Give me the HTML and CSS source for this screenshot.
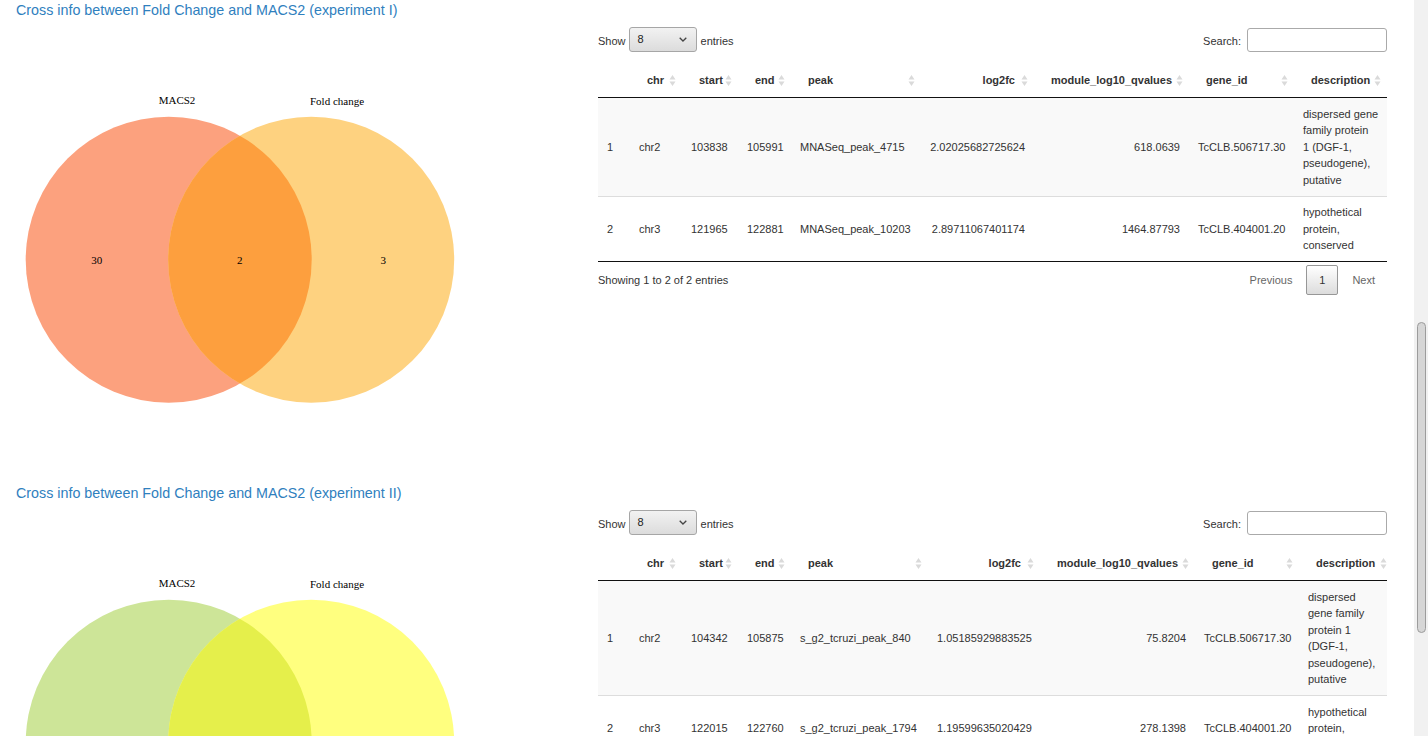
FILE: index.html
```html
<!DOCTYPE html>
<html lang="en">
<head>
<meta charset="utf-8">
<title>Cross info</title>
<link rel="stylesheet" href="styles.css">
</head>
<body>
<div class="page">

  <section class="panel">
    <h4 class="panel-title">Cross info between Fold Change and MACS2 (experiment I)</h4>
    <div class="panel-row">
      <div class="plot">
        <svg class="venn" width="582" height="463" viewBox="0 0 582 463">
          <defs><clipPath id="clip1"><circle cx="152.7" cy="239.7" r="143"/></clipPath></defs>
          <circle cx="152.7" cy="239.7" r="143" class="v1-a"/>
          <circle cx="295.2" cy="239.7" r="143" class="v1-b"/>
          <circle cx="295.2" cy="239.7" r="143" class="v1-ab" clip-path="url(#clip1)"/>
          <text class="venn-text" x="161" y="84">MACS2</text>
          <text class="venn-text" x="321" y="85">Fold change</text>
          <text class="venn-text" x="80.7" y="244">30</text>
          <text class="venn-text" x="223.7" y="244">2</text>
          <text class="venn-text" x="367.3" y="244">3</text>
        </svg>
      </div>
      <div class="table-col">
        <div class="dt-top">
          <div class="dt-length"><span class="lbl">Show</span><div class="select"><span>8</span><svg class="chev" width="8" height="5" viewBox="0 0 8 5"><path d="M0.7 0.7 4 4 7.3 0.7"/></svg></div><span class="lbl">entries</span></div>
          <div class="dt-filter"><span class="lbl">Search:</span><span class="search-input"></span></div>
        </div>
        <table class="dt dt-exp1">
          <colgroup><col class="c-rn"><col class="c-chr"><col class="c-start"><col class="c-end"><col class="c-peak"><col class="c-fc"><col class="c-q"><col class="c-gene"><col class="c-desc"></colgroup>
          <thead>
            <tr>
              <th class="rn"></th>
              <th><div class="th-in"><span>chr</span><svg class="sort" viewBox="0 0 19 17"><path d="M9.5 3 12.5 7.5H6.5z M9.5 14 12.5 9.5H6.5z"/></svg></div></th>
              <th><div class="th-in"><span>start</span><svg class="sort" viewBox="0 0 19 17"><path d="M9.5 3 12.5 7.5H6.5z M9.5 14 12.5 9.5H6.5z"/></svg></div></th>
              <th><div class="th-in"><span>end</span><svg class="sort" viewBox="0 0 19 17"><path d="M9.5 3 12.5 7.5H6.5z M9.5 14 12.5 9.5H6.5z"/></svg></div></th>
              <th><div class="th-in"><span>peak</span><svg class="sort" viewBox="0 0 19 17"><path d="M9.5 3 12.5 7.5H6.5z M9.5 14 12.5 9.5H6.5z"/></svg></div></th>
              <th class="num"><div class="th-in"><span>log2fc</span><svg class="sort" viewBox="0 0 19 17"><path d="M9.5 3 12.5 7.5H6.5z M9.5 14 12.5 9.5H6.5z"/></svg></div></th>
              <th class="num"><div class="th-in"><span>module_log10_qvalues</span><svg class="sort" viewBox="0 0 19 17"><path d="M9.5 3 12.5 7.5H6.5z M9.5 14 12.5 9.5H6.5z"/></svg></div></th>
              <th><div class="th-in"><span>gene_id</span><svg class="sort" viewBox="0 0 19 17"><path d="M9.5 3 12.5 7.5H6.5z M9.5 14 12.5 9.5H6.5z"/></svg></div></th>
              <th class="last"><div class="th-in"><span>description</span><svg class="sort" viewBox="0 0 19 17"><path d="M9.5 3 12.5 7.5H6.5z M9.5 14 12.5 9.5H6.5z"/></svg></div></th>
            </tr>
          </thead>
          <tbody>
            <tr class="odd">
              <td>1</td><td>chr2</td><td>103838</td><td>105991</td><td>MNASeq_peak_4715</td>
              <td class="num">2.02025682725624</td><td class="num">618.0639</td><td>TcCLB.506717.30</td>
              <td class="desc">dispersed gene<br>family protein<br>1 (DGF-1, pseudogene), putative</td>
            </tr>
            <tr>
              <td>2</td><td>chr3</td><td>121965</td><td>122881</td><td>MNASeq_peak_10203</td>
              <td class="num">2.89711067401174</td><td class="num">1464.87793</td><td>TcCLB.404001.20</td>
              <td class="desc">hypothetical protein, conserved</td>
            </tr>
          </tbody>
        </table>
        <div class="dt-bottom">
          <div class="dt-info">Showing 1 to 2 of 2 entries</div>
          <div class="dt-paginate">
            <span class="pg-btn">Previous</span><span class="pg-btn current">1</span><span class="pg-btn">Next</span>
          </div>
        </div>
      </div>
    </div>
  </section>

  <section class="panel">
    <h4 class="panel-title">Cross info between Fold Change and MACS2 (experiment II)</h4>
    <div class="panel-row">
      <div class="plot">
        <svg class="venn" width="582" height="463" viewBox="0 0 582 463">
          <defs><clipPath id="clip2"><circle cx="152.7" cy="239.7" r="143"/></clipPath></defs>
          <circle cx="152.7" cy="239.7" r="143" class="v2-a"/>
          <circle cx="295.2" cy="239.7" r="143" class="v2-b"/>
          <circle cx="295.2" cy="239.7" r="143" class="v2-ab" clip-path="url(#clip2)"/>
          <text class="venn-text" x="161" y="84">MACS2</text>
          <text class="venn-text" x="321" y="85">Fold change</text>
        </svg>
      </div>
      <div class="table-col">
        <div class="dt-top">
          <div class="dt-length"><span class="lbl">Show</span><div class="select"><span>8</span><svg class="chev" width="8" height="5" viewBox="0 0 8 5"><path d="M0.7 0.7 4 4 7.3 0.7"/></svg></div><span class="lbl">entries</span></div>
          <div class="dt-filter"><span class="lbl">Search:</span><span class="search-input"></span></div>
        </div>
        <table class="dt dt-exp2">
          <colgroup><col class="c-rn"><col class="c-chr"><col class="c-start"><col class="c-end"><col class="c-peak"><col class="c-fc"><col class="c-q"><col class="c-gene"><col class="c-desc"></colgroup>
          <thead>
            <tr>
              <th class="rn"></th>
              <th><div class="th-in"><span>chr</span><svg class="sort" viewBox="0 0 19 17"><path d="M9.5 3 12.5 7.5H6.5z M9.5 14 12.5 9.5H6.5z"/></svg></div></th>
              <th><div class="th-in"><span>start</span><svg class="sort" viewBox="0 0 19 17"><path d="M9.5 3 12.5 7.5H6.5z M9.5 14 12.5 9.5H6.5z"/></svg></div></th>
              <th><div class="th-in"><span>end</span><svg class="sort" viewBox="0 0 19 17"><path d="M9.5 3 12.5 7.5H6.5z M9.5 14 12.5 9.5H6.5z"/></svg></div></th>
              <th><div class="th-in"><span>peak</span><svg class="sort" viewBox="0 0 19 17"><path d="M9.5 3 12.5 7.5H6.5z M9.5 14 12.5 9.5H6.5z"/></svg></div></th>
              <th class="num"><div class="th-in"><span>log2fc</span><svg class="sort" viewBox="0 0 19 17"><path d="M9.5 3 12.5 7.5H6.5z M9.5 14 12.5 9.5H6.5z"/></svg></div></th>
              <th class="num"><div class="th-in"><span>module_log10_qvalues</span><svg class="sort" viewBox="0 0 19 17"><path d="M9.5 3 12.5 7.5H6.5z M9.5 14 12.5 9.5H6.5z"/></svg></div></th>
              <th><div class="th-in"><span>gene_id</span><svg class="sort" viewBox="0 0 19 17"><path d="M9.5 3 12.5 7.5H6.5z M9.5 14 12.5 9.5H6.5z"/></svg></div></th>
              <th class="last"><div class="th-in"><span>description</span><svg class="sort" viewBox="0 0 19 17"><path d="M9.5 3 12.5 7.5H6.5z M9.5 14 12.5 9.5H6.5z"/></svg></div></th>
            </tr>
          </thead>
          <tbody>
            <tr class="odd">
              <td>1</td><td>chr2</td><td>104342</td><td>105875</td><td>s_g2_tcruzi_peak_840</td>
              <td class="num">1.05185929883525</td><td class="num">75.8204</td><td>TcCLB.506717.30</td>
              <td class="desc">dispersed gene family protein 1 (DGF-1, pseudogene), putative</td>
            </tr>
            <tr>
              <td>2</td><td>chr3</td><td>122015</td><td>122760</td><td>s_g2_tcruzi_peak_1794</td>
              <td class="num">1.19599635020429</td><td class="num">278.1398</td><td>TcCLB.404001.20</td>
              <td class="desc">hypothetical protein, conserved</td>
            </tr>
          </tbody>
        </table>
      </div>
    </div>
  </section>

</div>
<div class="scrollbar"><div class="thumb"></div></div>
</body>
</html>
```

FILE: styles.css
```css
html, body {
  margin: 0;
  height: 736px;
  overflow: hidden;
  background: #fff;
}
body {
  display: flex;
  font-family: "Liberation Sans", Arial, Helvetica, sans-serif;
  font-size: 11px;
  color: #333;
}
.page {
  flex: 1;
  min-width: 0;
}
.panel {
  padding: 0 16px;
}
.panel-title {
  margin: 0;
  font-size: 14.3px;
  line-height: 20px;
  font-weight: normal;
  color: #2f80be;
}
.panel-row {
  display: flex;
}
.plot {
  width: 582px;
  flex: none;
}
.venn {
  display: block;
}
.venn-text {
  font-family: "Liberation Serif", "Times New Roman", serif;
  font-size: 11px;
  fill: #000;
  text-anchor: middle;
}
.v1-a { fill: #fca17e; }
.v1-b { fill: #fed280; }
.v1-ab { fill: #fd9f3e; }
.v2-a { fill: #cde598; }
.v2-b { fill: #ffff7f; }
.v2-ab { fill: #e5ef4b; }

.table-col {
  width: 789px;
  flex: none;
  padding-top: 7px;
}
.dt-top {
  display: flex;
  justify-content: space-between;
  align-items: center;
  height: 25px;
}
.dt-length, .dt-filter {
  display: flex;
  align-items: center;
  line-height: 16.5px;
}
.lbl {
  padding-top: 3px;
}
.select {
  display: flex;
  align-items: center;
  box-sizing: border-box;
  width: 68px;
  height: 25px;
  margin: 0 4px 0 3px;
  padding: 0 9px 0 8px;
  border: 1px solid #a6a6a6;
  border-radius: 3px;
  background: linear-gradient(#f2f2f2, #dcdcdc);
  color: #222;
}
.chev {
  margin-left: auto;
  fill: none;
  stroke: #444;
  stroke-width: 1.3;
}
.search-input {
  display: block;
  box-sizing: border-box;
  width: 140px;
  height: 24px;
  margin-left: 6px;
  border: 1px solid #aaa;
  border-radius: 3px;
  background: #fff;
}

.dt {
  width: 789px;
  margin-top: 12px;
  table-layout: fixed;
  border-collapse: separate;
  border-spacing: 0;
  border-bottom: 1px solid #111;
  line-height: 16.5px;
}
.c-rn { width: 32px; }
.c-chr { width: 52px; }
.c-start { width: 56px; }
.c-end { width: 53px; }
.dt-exp1 .c-peak { width: 130px; }
.dt-exp1 .c-fc { width: 113px; }
.dt-exp1 .c-q { width: 155px; }
.dt-exp1 .c-gene { width: 105px; }
.dt-exp1 .c-desc { width: 93px; }
.dt-exp2 .c-peak { width: 137px; }
.dt-exp2 .c-fc { width: 112px; }
.dt-exp2 .c-q { width: 155px; }
.dt-exp2 .c-gene { width: 104px; }
.dt-exp2 .c-desc { width: 88px; }

.dt th {
  padding: 8px 0 8px 17px;
  border-bottom: 1px solid #111;
  font-weight: bold;
  text-align: left;
  color: #333;
}
.th-in {
  display: flex;
  align-items: center;
}
.th-in span {
  flex: 1;
  min-width: 0;
  white-space: nowrap;
}
.dt th.num span {
  text-align: right;
}
.sort {
  flex: none;
  display: block;
  width: 19px;
  height: 17px;
  fill: #dadada;
}
.dt-exp2 th.last .sort {
  margin-right: -6px;
}
.dt td {
  padding: 7.5px 9px;
  vertical-align: middle;
  border-top: 1px solid #ddd;
  color: #333;
}
.dt-exp1 td.desc {
  padding-right: 7px;
}
.dt tbody tr:first-child td {
  border-top: none;
}
.dt td.num {
  text-align: right;
  white-space: nowrap;
}
.dt tr.odd td {
  background: #f9f9f9;
}

.dt-bottom {
  display: flex;
  justify-content: space-between;
  align-items: flex-start;
  line-height: 16.5px;
}
.dt-info {
  padding-top: 10px;
}
.dt-paginate {
  display: flex;
  padding-top: 3px;
}
.pg-btn {
  display: block;
  min-width: 8px;
  padding: 5.5px 11px;
  margin-left: 2px;
  border: 1px solid transparent;
  border-radius: 2px;
  color: #666;
  text-align: center;
}
.pg-btn.current {
  border-color: #979797;
  background: linear-gradient(#fff, #dcdcdc);
  color: #333;
}

.scrollbar {
  flex: none;
  width: 14px;
  height: 736px;
  box-sizing: border-box;
  padding-top: 322px;
  background: #f1f1f1;
}
.thumb {
  box-sizing: border-box;
  width: 9px;
  height: 311px;
  margin-left: 3px;
  border: 1px solid #9c9c9c;
  border-radius: 5px;
  background: #d6d6d6;
}
```
